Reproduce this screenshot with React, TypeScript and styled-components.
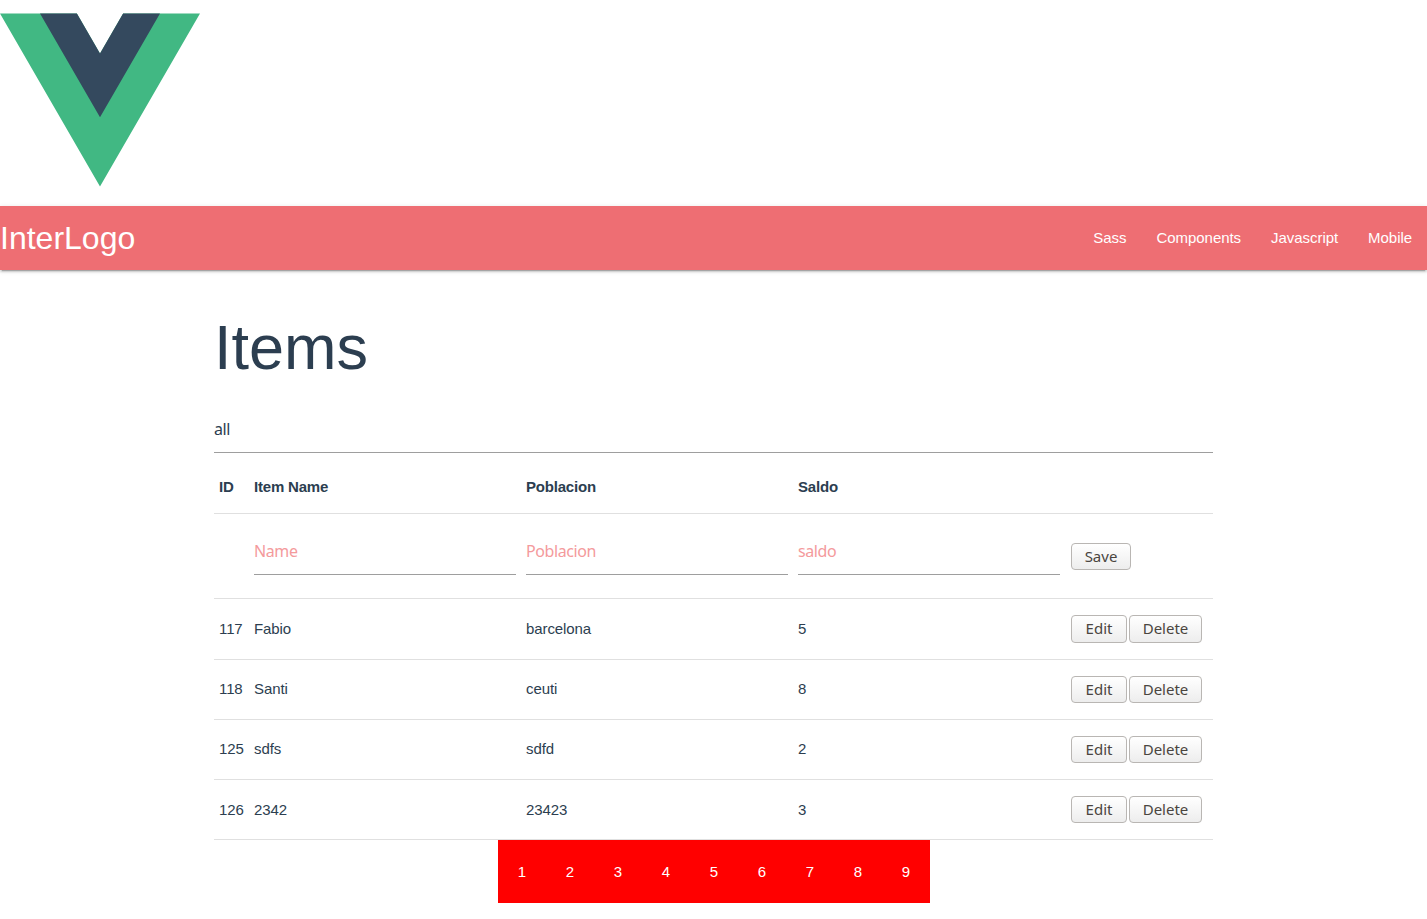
import React from "react";
import styled, { createGlobalStyle } from "styled-components";

const Global = createGlobalStyle`
  html, body { margin: 0; padding: 0; background: #fff; }
  body { font-family: "Liberation Sans", Arial, sans-serif; font-size: 15px; color: #2c3e50; }
`;

const uiFont = `"Noto Sans", "Open Sans", sans-serif`;

const LogoBox = styled.div`
  width: 200px;
  height: 206px;
`;
const Logo = styled.svg`
  display: block;
  width: 200px;
  height: 200px;
`;
const Nav = styled.nav`
  height: 64px;
  background: #ee6e73;
  display: flex;
  align-items: center;
  justify-content: space-between;
  box-shadow: 0 2px 2px 0 rgba(0,0,0,.14), 0 1px 5px 0 rgba(0,0,0,.12), 0 3px 1px -2px rgba(0,0,0,.2);
  color: #fff;
`;
const Brand = styled.a`
  font-size: 32px;
  line-height: 64px;
`;
const NavLinks = styled.ul`
  display: flex;
  list-style: none;
  margin: 0;
  padding: 0;
`;
const NavLink = styled.li`
  padding: 0 15px;
  font-size: 15px;
  letter-spacing: -0.05px;
  line-height: 64px;
`;
const Container = styled.main`
  width: 999px;
  margin: 0 auto;
`;
const Title = styled.h1`
  font-size: 63px;
  font-weight: 400;
  line-height: 66px;
  margin: 44px 0 0;
  height: 101px;
  color: #2c3e50;
`;
const FilterInput = styled.input`
  display: block;
  width: 100%;
  box-sizing: border-box;
  height: 38px;
  border: 0;
  border-bottom: 1px solid #9e9e9e;
  outline: 0;
  padding: 0 0 9px;
  margin: 0;
  font: 16px ${uiFont};
  letter-spacing: -0.4px;
  color: #2c3e50;
  background: transparent;
`;
const Table = styled.table`
  width: 999px;
  border-collapse: collapse;
  table-layout: fixed;
`;
const Row = styled.tr<{ $h: number }>`
  height: ${(p) => p.$h}px;
  border-bottom: 1px solid #e0e0e0;
`;
const Head = styled.th`
  padding: 8px 5px 0;
  text-align: left;
  font-weight: 700;
  font-size: 15px;
  letter-spacing: -0.2px;
`;
const Cell = styled.td<{ $lift?: boolean }>`
  padding: 0 5px ${(p) => (p.$lift ? "2px" : "0")};
  font-size: 15px;
  letter-spacing: -0.1px;
`;
const ActionCell = styled.td<{ $drop?: boolean }>`
  padding: ${(p) => (p.$drop ? 2 : 0)}px 0 0 6px;
`;
const FieldInput = styled.input`
  display: block;
  width: 100%;
  box-sizing: border-box;
  height: 46px;
  margin-bottom: 8px;
  border: 0;
  border-bottom: 1px solid #9e9e9e;
  outline: 0;
  padding: 0;
  font: 16px ${uiFont};
  letter-spacing: -0.4px;
  background: transparent;
  &::placeholder { color: #f49a9c; opacity: 1; }
`;
const Actions = styled.div`
  display: flex;
  gap: 2px;
`;
const Button = styled.button<{ $w: number; $tall?: boolean; $raised?: boolean }>`
  box-sizing: border-box;
  display: block;
  width: ${(p) => p.$w}px;
  height: ${(p) => (p.$tall ? 28 : 27)}px;
  padding: 0 0 ${(p) => (p.$tall || p.$raised ? 2 : 0)}px;
  border: 1px solid #b9b6b3;
  border-radius: 4px;
  background: linear-gradient(#ffffff, #ededed);
  font: 15px ${uiFont};
  color: #4a4540;
`;
const Pager = styled.div`
  display: flex;
  justify-content: center;
`;
const Page = styled.a`
  box-sizing: border-box;
  width: 48px;
  height: 63px;
  padding-left: 1px;
  line-height: 63px;
  text-align: center;
  background: #ff0000;
  color: #fff;
  font-size: 15px;
`;

const rows = [
  { id: "117", name: "Fabio", city: "barcelona", saldo: "5", h: 61, lift: false },
  { id: "118", name: "Santi", city: "ceuti", saldo: "8", h: 60, lift: true },
  { id: "125", name: "sdfs", city: "sdfd", saldo: "2", h: 60, lift: true },
  { id: "126", name: "2342", city: "23423", saldo: "3", h: 60, lift: false },
];

export default function App() {
  return (
    <>
      <Global />
      <LogoBox>
        <Logo viewBox="0 0 261.76 226.69">
          <path d="M161.096.001l-30.225 52.351L100.647.001H-.005l130.877 226.688L261.749.001z" fill="#41b883" />
          <path d="M161.096.001l-30.225 52.351L100.647.001H52.346l78.526 136.01L209.398.001z" fill="#34495e" />
        </Logo>
      </LogoBox>
      <Nav>
        <Brand>InterLogo</Brand>
        <NavLinks>
          {["Sass", "Components", "Javascript", "Mobile"].map((l) => (
            <NavLink key={l}>{l}</NavLink>
          ))}
        </NavLinks>
      </Nav>
      <Container>
        <Title>Items</Title>
        <FilterInput defaultValue="all" />
        <Table>
          <colgroup>
            <col width="35" />
            <col width="272" />
            <col width="272" />
            <col width="272" />
            <col width="148" />
          </colgroup>
          <tbody>
            <Row $h={60}>
              <Head>ID</Head>
              <Head>Item Name</Head>
              <Head>Poblacion</Head>
              <Head>Saldo</Head>
              <Head />
            </Row>
            <Row $h={85}>
              <Cell />
              <Cell><FieldInput placeholder="Name" /></Cell>
              <Cell><FieldInput placeholder="Poblacion" /></Cell>
              <Cell><FieldInput placeholder="saldo" /></Cell>
              <ActionCell $drop><Button $w={60} $raised>Save</Button></ActionCell>
            </Row>
            {rows.map((r, i) => (
              <Row key={r.id} $h={r.h}>
                <Cell $lift={r.lift}>{r.id}</Cell>
                <Cell $lift={r.lift}>{r.name}</Cell>
                <Cell $lift={r.lift}>{r.city}</Cell>
                <Cell $lift={r.lift}>{r.saldo}</Cell>
                <ActionCell>
                  <Actions>
                    <Button $w={56} $tall={i === 0}>Edit</Button>
                    <Button $w={73} $tall={i === 0}>Delete</Button>
                  </Actions>
                </ActionCell>
              </Row>
            ))}
          </tbody>
        </Table>
        <Pager>
          {[1, 2, 3, 4, 5, 6, 7, 8, 9].map((n) => (
            <Page key={n}>{n}</Page>
          ))}
        </Pager>
      </Container>
    </>
  );
}
